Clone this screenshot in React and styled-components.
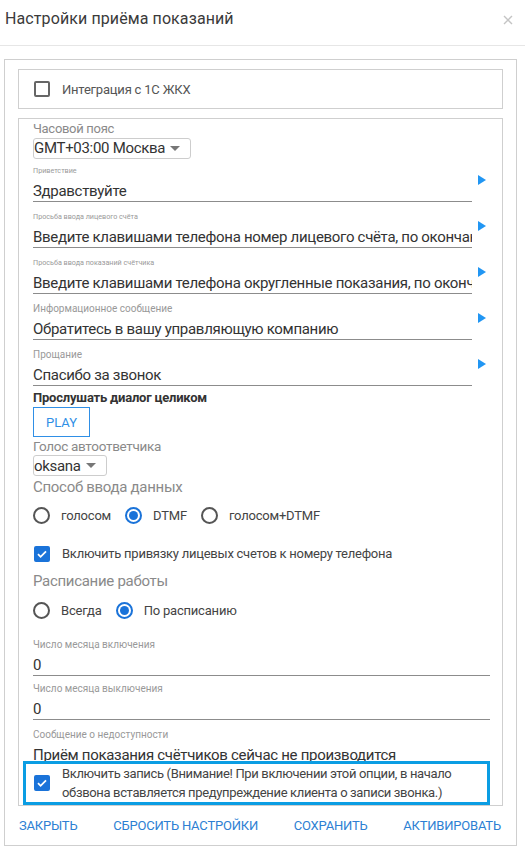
import React from "react";
import styled, { createGlobalStyle } from "styled-components";

const GlobalStyle = createGlobalStyle`
    html, body {
        margin: 0;
        padding: 0;
        background: #fff;
    }
    body {
        font-family: Roboto, "Open Sans", "Liberation Sans", sans-serif;
        color: #333;
    }
`;

const fields = [
    { label: "Приветствие", value: "Здравствуйте", tiny: true },
    {
        label: "Просьба ввода лицевого счёта",
        value: "Введите клавишами телефона номер лицевого счёта, по окончании нажмите решётку",
        tiny: true
    },
    {
        label: "Просьба ввода показаний счётчика",
        value: "Введите клавишами телефона округленные показания, по окончании нажмите решётку",
        tiny: true
    },
    { label: "Информационное сообщение", value: "Обратитесь в вашу управляющую компанию" },
    { label: "Прощание", value: "Спасибо за звонок" }
];

const CheckIcon = () => (
    <svg width='12' height='12' viewBox='0 0 12 12'>
        <path d='M2 6.2l2.6 2.6L10 3.4' fill='none' stroke='#fff' strokeWidth='1.8' />
    </svg>
);

const Checkbox = ({ checked }) => (
    <CheckBoxMark checked={checked}>{checked && <CheckIcon />}</CheckBoxMark>
);

const Radio = ({ checked, label }) => (
    <RadioItem>
        <RadioMark checked={checked} />
        <span>{label}</span>
    </RadioItem>
);

const App = () => {
    return (
        <Dialog>
            <GlobalStyle />
            <Header>
                <Title>Настройки приёма показаний</Title>
                <Close>
                    <svg width='10' height='10' viewBox='0 0 10 10'>
                        <path d='M1 1l8 8M9 1l-8 8' stroke='#c4c4c4' strokeWidth='1.4' />
                    </svg>
                </Close>
            </Header>
            <Frame>
                <IntegrationBox>
                    <Checkbox />
                    <span>Интеграция с 1С ЖКХ</span>
                </IntegrationBox>
                <Panel>
                    <SectionLabel>Часовой пояс</SectionLabel>
                    <Select width='158px'>
                        GMT+03:00 Москва <Caret />
                    </Select>
                    {fields.map((f, i) => (
                        <Field key={f.label} first={i === 0}>
                            <FieldMain>
                                <SmallLabel tiny={f.tiny}>{f.label}</SmallLabel>
                                <Input>{f.value}</Input>
                            </FieldMain>
                            <PlayArrow />
                        </Field>
                    ))}
                    <BoldLabel>Прослушать диалог целиком</BoldLabel>
                    <PlayButton type='button'>PLAY</PlayButton>
                    <SectionLabel size='13.5px'>Голос автоответчика</SectionLabel>
                    <Select width='74px'>
                        oksana <Caret />
                    </Select>
                    <GroupTitle gap='1px'>Способ ввода данных</GroupTitle>
                    <RadioRow>
                        <Radio label='голосом' />
                        <Radio checked label='DTMF' />
                        <Radio label='голосом+DTMF' />
                    </RadioRow>
                    <CheckRow>
                        <Checkbox checked />
                        <span>Включить привязку лицевых счетов к номеру телефона</span>
                    </CheckRow>
                    <GroupTitle>Расписание работы</GroupTitle>
                    <RadioRow>
                        <Radio label='Всегда' />
                        <Radio checked label='По расписанию' />
                    </RadioRow>
                    <PlainField gap='17px'>
                        <SmallLabel>Число месяца включения</SmallLabel>
                        <Input>0</Input>
                    </PlainField>
                    <PlainField gap='6px'>
                        <SmallLabel>Число месяца выключения</SmallLabel>
                        <Input>0</Input>
                    </PlainField>
                    <PlainField gap='8px'>
                        <SmallLabel>Сообщение о недоступности</SmallLabel>
                        <Input plain>Приём показания счётчиков сейчас не производится</Input>
                    </PlainField>
                    <Highlight>
                        <Checkbox checked />
                        <span>
                            Включить запись (Внимание! При включении этой опции, в начало
                            обзвона вставляется предупреждение клиента о записи звонка.)
                        </span>
                    </Highlight>
                </Panel>
                <Footer>
                    <FooterButton>Закрыть</FooterButton>
                    <FooterButton>Сбросить настройки</FooterButton>
                    <FooterButton>Сохранить</FooterButton>
                    <FooterButton>Активировать</FooterButton>
                </Footer>
            </Frame>
        </Dialog>
    );
};

const Dialog = styled.div`
    width: 525px;
    height: 856px;
    overflow: hidden;
    background: #fff;
`;

const Header = styled.div`
    display: flex;
    align-items: center;
    justify-content: space-between;
    height: 45px;
    padding: 0 12px 0 5px;
    border-bottom: 1px solid #e6e6e6;
    box-sizing: content-box;
`;

const Title = styled.div`
    font-size: 16px;
    letter-spacing: 0.1px;
    color: #3a3a3a;
    margin-top: -8px;
`;

const Close = styled.div`
    display: flex;
    margin-top: -6px;
`;

const Frame = styled.div`
    margin: 13px 8px 0 4px;
    height: 787px;
    border: 1px solid #cfcfcf;
    padding: 9px 13px 0;
    display: flex;
    flex-direction: column;
    box-sizing: border-box;
`;

const IntegrationBox = styled.div`
    display: flex;
    align-items: center;
    gap: 12px;
    height: 40px;
    box-sizing: border-box;
    border: 1px solid #cfcfcf;
    padding-left: 15px;
    font-size: 13px;
    letter-spacing: -0.2px;
    color: #555;
`;

const Panel = styled.div`
    margin-top: 9px;
    height: 688px;
    box-sizing: border-box;
    border: 1px solid #cfcfcf;
    padding: 1px 12px 0 14px;
    overflow: hidden;
    display: flex;
    flex-direction: column;
    align-items: flex-start;
`;

const SectionLabel = styled.div`
    font-size: ${(p) => p.size || "13px"};
    letter-spacing: -0.3px;
    line-height: 18px;
    color: #8a8a8a;
`;

const Select = styled.div`
    display: flex;
    align-items: center;
    justify-content: space-between;
    width: ${(p) => p.width};
    height: 21px;
    box-sizing: border-box;
    border: 1px solid #cdcdcd;
    border-radius: 3px;
    padding-right: 10px;
    font-size: 15px;
    letter-spacing: -0.3px;
    color: #333;
`;

const Caret = styled.span`
    width: 0;
    height: 0;
    border-left: 5px solid transparent;
    border-right: 5px solid transparent;
    border-top: 5px solid #777;
`;

const Field = styled.div`
    display: flex;
    align-self: stretch;
    align-items: flex-start;
    margin-top: ${(p) => (p.first ? "5px" : "8px")};
`;

const FieldMain = styled.div`
    flex: 1;
    min-width: 0;
`;

const SmallLabel = styled.div`
    font-size: ${(p) => (p.tiny ? "7.2px" : "10px")};
    line-height: 14px;
    color: #999;
`;

const Input = styled.div`
    height: 24px;
    box-sizing: border-box;
    padding-top: 4px;
    line-height: 19px;
    font-size: 15px;
    letter-spacing: -0.3px;
    color: #333;
    white-space: nowrap;
    overflow: hidden;
    border-bottom: 1px solid ${(p) => (p.plain ? "transparent" : "#8c8c8c")};
`;

const PlayArrow = styled.span`
    margin: 11px 4px 0 6px;
    width: 0;
    height: 0;
    border-top: 5px solid transparent;
    border-bottom: 5px solid transparent;
    border-left: 8px solid #2196f3;
`;

const PlainField = styled.div`
    align-self: stretch;
    margin-top: ${(p) => p.gap};
`;

const BoldLabel = styled.div`
    margin-top: 4px;
    font-size: 13px;
    line-height: 16px;
    font-weight: bold;
    letter-spacing: -0.2px;
    color: #333;
`;

const PlayButton = styled.button`
    margin-top: 1px;
    width: 57px;
    height: 31px;
    border: 1px solid #2f8fe6;
    background: #fff;
    color: #2f8fe6;
    font-family: inherit;
    font-size: 13px;
    padding: 0;
`;

const GroupTitle = styled.div`
    margin-top: ${(p) => p.gap || "0"};
    font-size: 15px;
    letter-spacing: -0.3px;
    line-height: 20px;
    color: #8a8a8a;
`;

const RadioRow = styled.div`
    display: flex;
    align-items: center;
    gap: 14px;
    height: 22px;
    margin-top: 8px;
`;

const RadioItem = styled.label`
    display: flex;
    align-items: center;
    gap: 11px;
    font-size: 13px;
    letter-spacing: -0.2px;
    color: #444;
`;

const RadioMark = styled.span`
    width: 17px;
    height: 17px;
    box-sizing: border-box;
    border-radius: 50%;
    border: 2px solid ${(p) => (p.checked ? "#1a73d9" : "#555")};
    display: flex;
    align-items: center;
    justify-content: center;
    &::after {
        content: "";
        display: ${(p) => (p.checked ? "block" : "none")};
        width: 9px;
        height: 9px;
        border-radius: 50%;
        background: #1a73d9;
    }
`;

const CheckBoxMark = styled.span`
    flex: none;
    width: 16px;
    height: 16px;
    box-sizing: border-box;
    border-radius: 2px;
    border: 2px solid ${(p) => (p.checked ? "#1a73d9" : "#666")};
    background: ${(p) => (p.checked ? "#1a73d9" : "#fff")};
    display: flex;
    align-items: center;
    justify-content: center;
`;

const CheckRow = styled.div`
    display: flex;
    align-items: center;
    gap: 12px;
    height: 22px;
    margin: 16px 0 7px 1px;
    font-size: 13px;
    letter-spacing: -0.25px;
    color: #444;
`;

const Highlight = styled.div`
    display: flex;
    align-items: center;
    gap: 12px;
    margin: -5px 0 0 -10px;
    width: 467px;
    box-sizing: border-box;
    border: 3px solid #0b9de3;
    padding: 0 6px 0 8px;
    font-size: 13px;
    letter-spacing: -0.35px;
    line-height: 19px;
    color: #444;
`;

const Footer = styled.div`
    display: flex;
    justify-content: space-between;
    align-items: center;
    flex: 1;
    padding: 0 2px 0 1px;
`;

const FooterButton = styled.button`
    border: 0;
    background: none;
    padding: 0;
    font-family: inherit;
    font-size: 13px;
    letter-spacing: -0.2px;
    text-transform: uppercase;
    color: #2d7fd3;
`;

export default App;
